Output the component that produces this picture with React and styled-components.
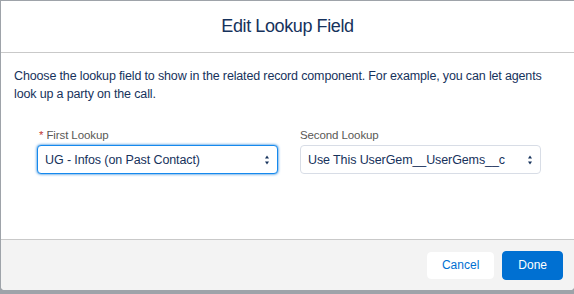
import React from 'react'
import styled, { createGlobalStyle } from 'styled-components'

const Global = createGlobalStyle`
  html, body {
    margin: 0;
    padding: 0;
    background: #9ea3a9;
    width: 574px;
    height: 294px;
    overflow: hidden;
  }
  * { box-sizing: border-box; }
`

const Modal = styled.div`
  margin: 1px 0 0 1px;
  width: 573px;
  height: 289px;
  background: #fff;
  border-radius: 0 0 4px 4px;
  display: flex;
  flex-direction: column;
  overflow: hidden;
  font-family: "Liberation Sans", Arial, sans-serif;
`

const Header = styled.div`
  height: 52px;
  display: flex;
  align-items: center;
  justify-content: center;
  border-bottom: 1px solid #c9c9c9;
  flex-shrink: 0;
`

const Title = styled.h2`
  margin: 0 0 1px 0;
  font-size: 18px;
  font-weight: 400;
  color: #16325c;
  letter-spacing: -0.4px;
`

const Body = styled.div`
  flex: 1;
  padding: 14px 13px 0 13px;
`

const Intro = styled.p`
  margin: 0;
  max-width: 545px;
  font-size: 12.5px;
  line-height: 18px;
  color: #16325c;
  letter-spacing: -0.15px;
`

const Fields = styled.div`
  display: flex;
  gap: 22px;
  padding: 25px 0 0 23px;
`

const Field = styled.div`
  width: 241px;
  display: flex;
  flex-direction: column;
`

const Label = styled.label`
  font-size: 11.5px;
  color: #5a5856;
  line-height: 14px;
  margin-bottom: 3px;
  letter-spacing: -0.1px;
`

const Star = styled.abbr`
  color: #c23934;
  text-decoration: none;
  margin: 0 3px 0 2px;
`

const Select = styled.div`
  height: 29px;
  border: 1px solid ${p => (p.focused ? '#1589ee' : '#d8dde6')};
  box-shadow: ${p => (p.focused ? '0 0 3px #0070d2' : 'none')};
  border-radius: 4px;
  display: flex;
  align-items: center;
  justify-content: space-between;
  padding: 0 7px 0 7px;
  font-size: 12.5px;
  letter-spacing: -0.1px;
  white-space: nowrap;
  color: #16325c;
  background: #fff;
`

const Arrows = styled.svg`
  width: 6px;
  height: 12px;
  flex-shrink: 0;
`

const Footer = styled.div`
  height: 51px;
  flex-shrink: 0;
  background: #f3f3f3;
  border-top: 1px solid #c9c9c9;
  display: flex;
  align-items: center;
  justify-content: flex-end;
  gap: 8px;
  padding-right: 11px;
`

const Button = styled.button`
  height: ${p => (p.brand ? '29px' : '27px')};
  padding: 0 ${p => (p.brand ? '15px' : '14px')};
  border-radius: 4px;
  border: 1px solid ${p => (p.brand ? '#0070d2' : '#fff')};
  background: ${p => (p.brand ? '#0070d2' : '#fff')};
  color: ${p => (p.brand ? '#fff' : '#0070d2')};
  font-family: "Liberation Sans", Arial, sans-serif;
  font-size: 12px;
  cursor: pointer;
`

const SelectArrows = () => (
  <Arrows viewBox="0 0 6 12">
    <path d="M3 1.5 L5 4.5 L1 4.5 Z" fill="#16325c" />
    <path d="M3 10.5 L5 7.5 L1 7.5 Z" fill="#16325c" />
  </Arrows>
)

export default function App() {
  return (
    <>
      <Global />
      <Modal>
        <Header>
          <Title>Edit Lookup Field</Title>
        </Header>
        <Body>
          <Intro>
            Choose the lookup field to show in the related record component. For example, you can let agents
            look up a party on the call.
          </Intro>
          <Fields>
            <Field>
              <Label>
                <Star title="required">*</Star>First Lookup
              </Label>
              <Select focused>
                <span>UG - Infos (on Past Contact)</span>
                <SelectArrows />
              </Select>
            </Field>
            <Field>
              <Label>Second Lookup</Label>
              <Select>
                <span>Use This UserGem__UserGems__c</span>
                <SelectArrows />
              </Select>
            </Field>
          </Fields>
        </Body>
        <Footer>
          <Button>Cancel</Button>
          <Button brand>Done</Button>
        </Footer>
      </Modal>
    </>
  )
}
